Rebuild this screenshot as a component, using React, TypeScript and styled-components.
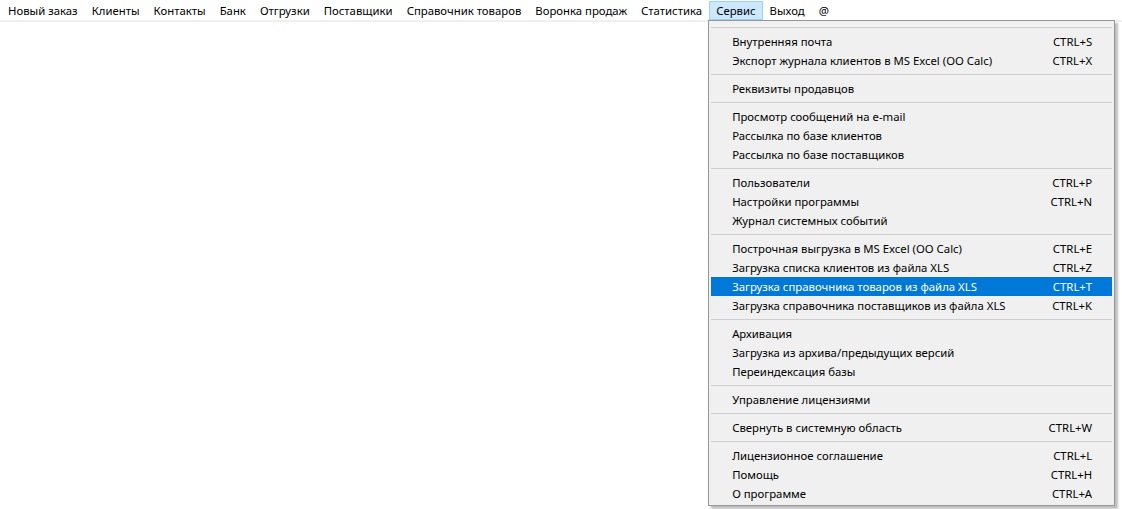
import React from "react";
import styled, { createGlobalStyle } from "styled-components";

const GlobalStyle = createGlobalStyle`
  html, body {
    margin: 0;
    padding: 0;
    background: #ffffff;
  }
  body {
    font-family: "Noto Sans", "Open Sans", sans-serif;
    font-size: 11.35px;
    color: #000000;
  }
`;

const PageEl = styled.div`
  display: flex;
  flex-direction: column;
  width: 1122px;
  height: 509px;
  overflow: hidden;
`;

const MenuBarEl = styled.div`
  display: flex;
  align-items: stretch;
  height: 19px;
  padding: 1px 0 0 1px;
  border-bottom: 2px solid #f0f0f0;
  background: #ffffff;
`;

const BarItemEl = styled.div<{ $open?: boolean }>`
  position: relative;
  display: flex;
  align-items: center;
  padding: 0 6px;
  border: 1px solid ${(p) => (p.$open ? "#99d1ff" : "transparent")};
  background: ${(p) => (p.$open ? "#cce8ff" : "transparent")};
  white-space: nowrap;
  line-height: 17px;
`;

const DropdownEl = styled.div`
  position: absolute;
  top: 18px;
  left: -2px;
  box-sizing: border-box;
  width: 407px;
  padding: 2px;
  background: #f0f0f0;
  border: 1px solid #979797;
  box-shadow: 3px 3px 2px rgba(0, 0, 0, 0.25);
  display: flex;
  flex-direction: column;
  z-index: 10;
`;

const SeparatorEl = styled.div`
  height: 9px;
  display: flex;
  align-items: center;
  &::after {
    content: "";
    flex: 1;
    height: 1px;
    background: #cfcfcf;
  }
`;

const ItemEl = styled.div<{ $active?: boolean }>`
  display: flex;
  align-items: center;
  justify-content: space-between;
  height: 19px;
  padding: 0 20px 0 21px;
  background: ${(p) => (p.$active ? "#0078d7" : "transparent")};
  color: ${(p) => (p.$active ? "#ffffff" : "#000000")};
  white-space: nowrap;
`;

const ShortcutEl = styled.span`
  margin-left: 24px;
`;

const CanvasEl = styled.div`
  flex: 1;
  background: #ffffff;
`;

const topMenu = [
  "Новый заказ",
  "Клиенты",
  "Контакты",
  "Банк",
  "Отгрузки",
  "Поставщики",
  "Справочник товаров",
  "Воронка продаж",
  "Статистика",
  "Сервис",
  "Выход",
  "@",
];

type Item = { label: string; key?: string; active?: boolean };

const groups: Item[][] = [
  [
    { label: "Внутренняя почта", key: "CTRL+S" },
    { label: "Экспорт журнала клиентов в MS Excel (OO Calc)", key: "CTRL+X" },
  ],
  [{ label: "Реквизиты продавцов" }],
  [
    { label: "Просмотр сообщений на e-mail" },
    { label: "Рассылка по базе клиентов" },
    { label: "Рассылка по базе поставщиков" },
  ],
  [
    { label: "Пользователи", key: "CTRL+P" },
    { label: "Настройки программы", key: "CTRL+N" },
    { label: "Журнал системных событий" },
  ],
  [
    { label: "Построчная выгрузка в MS Excel (OO Calc)", key: "CTRL+E" },
    { label: "Загрузка списка клиентов из файла XLS", key: "CTRL+Z" },
    {
      label: "Загрузка справочника товаров из файла XLS",
      key: "CTRL+T",
      active: true,
    },
    { label: "Загрузка справочника поставщиков из файла XLS", key: "CTRL+K" },
  ],
  [
    { label: "Архивация" },
    { label: "Загрузка из архива/предыдущих версий" },
    { label: "Переиндексация базы" },
  ],
  [{ label: "Управление лицензиями" }],
  [{ label: "Свернуть в системную область", key: "CTRL+W" }],
  [
    { label: "Лицензионное соглашение", key: "CTRL+L" },
    { label: "Помощь", key: "CTRL+H" },
    { label: "О программе", key: "CTRL+A" },
  ],
];

function ServiceMenu() {
  return (
    <DropdownEl>
      {groups.map((group, gi) => (
        <React.Fragment key={gi}>
          <SeparatorEl />
          {group.map((item) => (
            <ItemEl key={item.label} $active={item.active}>
              <span>{item.label}</span>
              {item.key && <ShortcutEl>{item.key}</ShortcutEl>}
            </ItemEl>
          ))}
        </React.Fragment>
      ))}
    </DropdownEl>
  );
}

export default function App() {
  return (
    <PageEl>
      <GlobalStyle />
      <MenuBarEl>
        {topMenu.map((name) => (
          <BarItemEl key={name} $open={name === "Сервис"}>
            {name}
            {name === "Сервис" && <ServiceMenu />}
          </BarItemEl>
        ))}
      </MenuBarEl>
      <CanvasEl />
    </PageEl>
  );
}
